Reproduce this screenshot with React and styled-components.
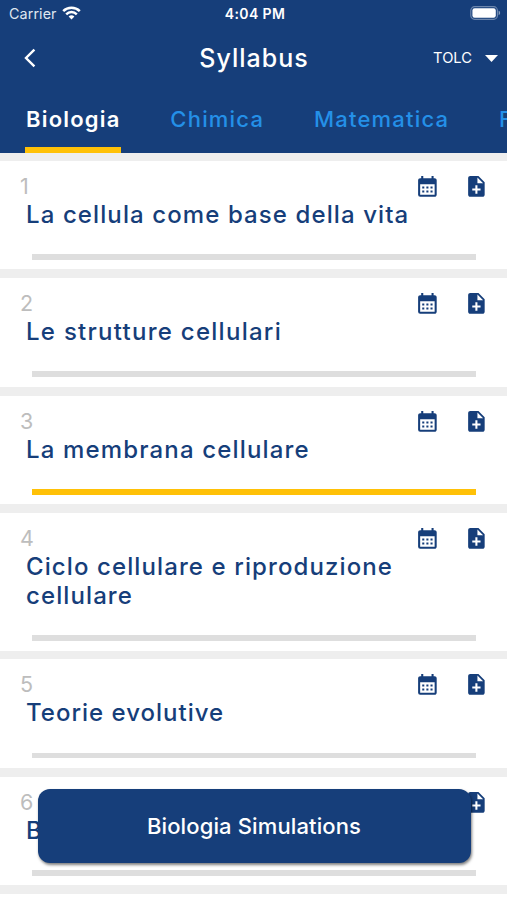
import React from 'react';
import styled, { createGlobalStyle } from 'styled-components';
import { MdCalendarMonth, MdNoteAdd } from 'react-icons/md';

const GlobalStyle = createGlobalStyle`
    * {
        box-sizing: border-box;
    }
    body {
        margin: 0;
        overflow: hidden;
        background: #ffffff;
        font-family: Inter, 'Liberation Sans', sans-serif;
    }
`;

const Screen = styled.div`
    position: relative;
    width: 507px;
    height: 900px;
    overflow: hidden;
    background: #eeeeee;
`;

const Header = styled.header`
    height: 152.5px;
    display: flex;
    flex-direction: column;
    background: #163e7a;
    color: #ffffff;
`;

const StatusBar = styled.div`
    height: 26px;
    padding: 0 6px 0 9px;
    display: grid;
    grid-template-columns: 1fr auto 1fr;
    align-items: center;
`;

const Carrier = styled.div`
    display: flex;
    align-items: center;
    gap: 5px;
    font-size: 14.3px;
    letter-spacing: 0.1px;
    color: #dfe6f0;
`;

const Clock = styled.div`
    font-size: 14px;
    font-weight: 600;
    letter-spacing: 0.4px;
`;

const BatteryIcon = styled.svg`
    justify-self: end;
`;

const NavBar = styled.div`
    height: 64px;
    padding: 0 8px 0 9px;
    display: grid;
    grid-template-columns: 1fr auto 1fr;
    align-items: center;
`;

const BackIcon = styled.svg`
    margin-left: 13.5px;
`;

const Title = styled.h1`
    margin: 0;
    font-size: 25px;
    font-weight: 500;
    letter-spacing: 1px;
`;

const Exam = styled.div`
    justify-self: end;
    display: flex;
    align-items: center;
    gap: 13px;
    padding-right: 1px;
    font-size: 14.7px;
`;

const Tabs = styled.nav`
    flex: 1;
    padding-left: 25px;
    display: flex;
    gap: 48.8px;
`;

const Tab = styled.div`
    flex: none;
    padding: 14px 0 0 1px;
    font-size: 22px;
    line-height: 30px;
    font-weight: ${(props) => (props.$active ? 600 : 500)};
    letter-spacing: 1.2px;
    color: ${(props) => (props.$active ? '#ffffff' : '#2490e8')};
    border-bottom: 6px solid
        ${(props) => (props.$active ? '#ffc107' : 'transparent')};
`;

const List = styled.main`
    padding-top: 8.5px;
    display: flex;
    flex-direction: column;
    gap: 8.8px;
`;

const Row = styled.section`
    padding: 14px 18px 9.5px 20px;
    background: #ffffff;
`;

const RowTop = styled.div`
    height: 25px;
    display: flex;
    align-items: flex-start;
    justify-content: space-between;
`;

const Number = styled.div`
    font-size: 21.5px;
    line-height: 22px;
    color: #bdbdbd;
`;

const Actions = styled.div`
    display: flex;
    gap: 24px;
    margin-top: -1px;
    color: #163e7a;
`;

const Topic = styled.h2`
    width: 395px;
    margin: 0 0 24.9px 6px;
    font-size: 24px;
    line-height: 29.3px;
    font-weight: 500;
    letter-spacing: ${(props) => props.$tracking || 1.1}px;
    color: #163e7a;
`;

const Progress = styled.div`
    height: 5.8px;
    margin: 0 13px 0 11.5px;
    background: ${(props) => (props.$done ? '#ffc107' : '#dedede')};
`;

const LastRow = styled.div`
    height: 20px;
    background: #ffffff;
`;

const Simulations = styled.button`
    position: absolute;
    left: 37.5px;
    top: 789px;
    width: 433px;
    height: 74px;
    padding: 0;
    border: 0;
    border-radius: 12px;
    background: #163e7a;
    box-shadow: 1px 2px 3px rgba(0, 0, 0, 0.5);
    color: #ffffff;
    font-family: inherit;
    font-size: 22px;
    font-weight: 500;
    letter-spacing: 0.13px;
`;

const tabs = ['Biologia', 'Chimica', 'Matematica', 'Fisica'];

const topics = [
    { title: 'La cellula come base della vita' },
    { title: 'Le strutture cellulari', tracking: 1.27 },
    { title: 'La membrana cellulare', tracking: 1.15, done: true },
    { title: 'Ciclo cellulare e riproduzione cellulare' },
    { title: 'Teorie evolutive', tracking: 1 },
    { title: 'Biodiversità' },
];

function App() {
    return (
        <Screen>
            <GlobalStyle />
            <Header>
                <StatusBar>
                    <Carrier>
                        Carrier
                        <svg width='19' height='14' viewBox='0 0 19 14'>
                            <g fill='none' stroke='#fff' strokeWidth='2.5'>
                                <path d='M1.2 5.1a11.8 11.8 0 0 1 16.6 0' />
                                <path d='M4.2 8.3a7.5 7.5 0 0 1 10.6 0' />
                            </g>
                            <path
                                d='M9.5 13.6 6.6 10.6a4.1 4.1 0 0 1 5.8 0Z'
                                fill='#fff'
                            />
                        </svg>
                    </Carrier>
                    <Clock>4:04 PM</Clock>
                    <BatteryIcon width='31' height='14' viewBox='0 0 31 14'>
                        <rect
                            x='0.8'
                            y='0.7'
                            width='26.6'
                            height='12.6'
                            rx='3.8'
                            fill='none'
                            stroke='#6c86ad'
                            strokeWidth='1.2'
                        />
                        <rect
                            x='2.4'
                            y='2.3'
                            width='23.4'
                            height='9.4'
                            rx='2.2'
                            fill='#fff'
                        />
                        <path d='M28.6 4.8c2 .6 2 3.8 0 4.4Z' fill='#8a9fbd' />
                    </BatteryIcon>
                </StatusBar>
                <NavBar>
                    <BackIcon width='14' height='20' viewBox='0 0 14 20'>
                        <path
                            d='M11.4 1.6 3 10l8.4 8.4'
                            fill='none'
                            stroke='#fff'
                            strokeWidth='2.4'
                        />
                    </BackIcon>
                    <Title>Syllabus</Title>
                    <Exam>
                        TOLC
                        <svg width='13' height='7' viewBox='0 0 13 7'>
                            <path d='M0 0h13L6.5 7Z' fill='#fff' />
                        </svg>
                    </Exam>
                </NavBar>
                <Tabs>
                    {tabs.map((tab, i) => (
                        <Tab key={tab} $active={i === 0}>
                            {tab}
                        </Tab>
                    ))}
                </Tabs>
            </Header>
            <List>
                {topics.map((topic, i) => (
                    <Row key={topic.title}>
                        <RowTop>
                            <Number>{i + 1}</Number>
                            <Actions>
                                <MdCalendarMonth size={24.8} />
                                <MdNoteAdd size={24.8} />
                            </Actions>
                        </RowTop>
                        <Topic $tracking={topic.tracking}>{topic.title}</Topic>
                        <Progress $done={topic.done} />
                    </Row>
                ))}
                <LastRow />
            </List>
            <Simulations>Biologia Simulations</Simulations>
        </Screen>
    );
}

export default App;
